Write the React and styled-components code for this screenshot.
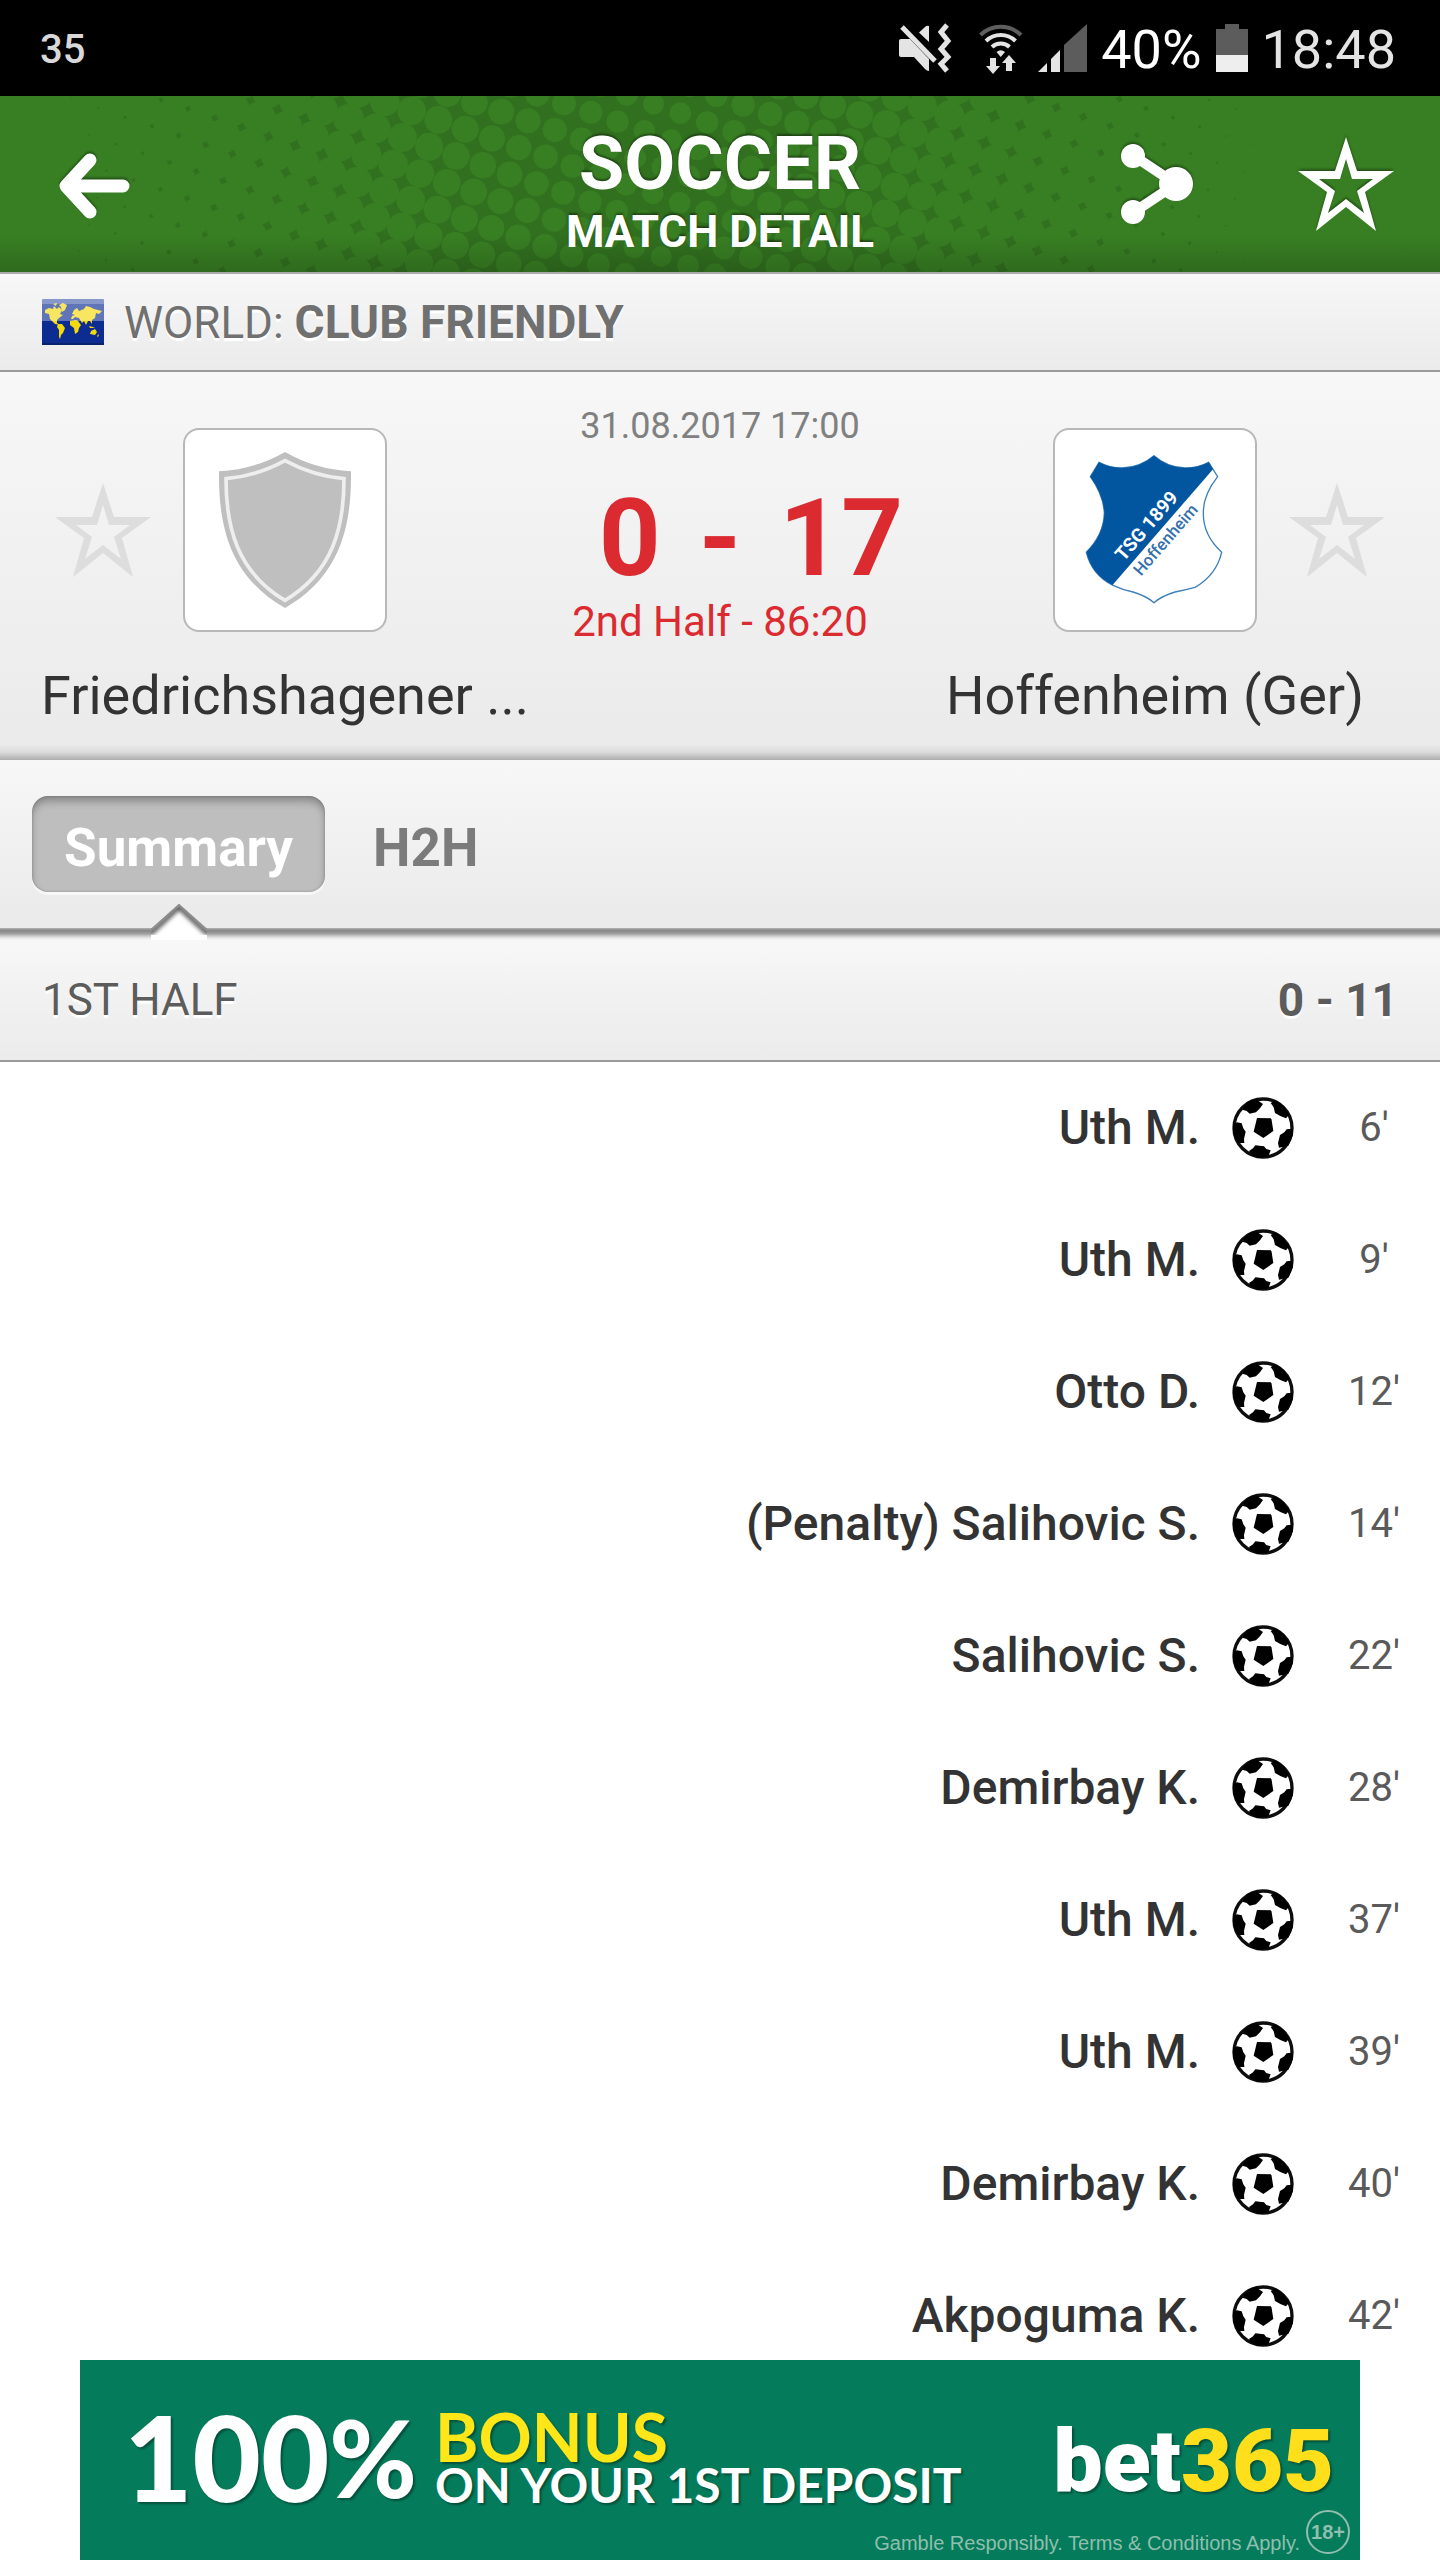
import React, {useState} from 'react';
import styled, {createGlobalStyle} from 'styled-components';

const GlobalStyle = createGlobalStyle`
  * { box-sizing: border-box; }
  html, body { margin: 0; padding: 0; background: #ffffff; }
  button { border: none; background: none; padding: 0; margin: 0; font-family: inherit; cursor: pointer; }
  svg { display: block; }
`;

const Page = styled.div`
  display: flex;
  flex-direction: column;
  height: 100vh;
  font-family: Roboto, "Liberation Sans", sans-serif;
  color: #333333;
`;

// ============ status bar ============
const StatusBar = styled.div`
  display: flex;
  justify-content: space-between;
  align-items: center;
  flex: none;
  height: 96px;
  padding: 0 44px 0 40px;
  background: #000000;
`;

const Notice = styled.span`
  padding-top: 4px;
  font-size: 40px;
  line-height: 44px;
  font-weight: 500;
  color: #d8d8d8;
`;

const StatusIcons = styled.div`
  display: flex;
  align-items: center;
  gap: 14px;
`;

const StatusGroup = styled.div`
  display: flex;
  gap: 26px;
`;

const StatusText = styled.span`
  padding-top: 4px;
  font-size: 54px;
  line-height: 60px;
  color: ${props=>props.color};
`;

// ============ green header ============
const Header = styled.header`
  position: relative;
  display: flex;
  justify-content: space-between;
  align-items: center;
  flex: none;
  height: 178px;
  padding: 0 46px;
  border-bottom: 2px solid #aaaaaa;
  background: #387f23;
  overflow: hidden;
`;

const Pattern = styled.svg`
  position: absolute;
  top: 0;
  left: 0;
  width: 100%;
  height: 100%;
`;

const HeaderSide = styled.div`
  position: relative;
  display: flex;
  flex: 1;
  align-items: center;
  justify-content: ${props=>props.justify};
  gap: 104px;
`;

const HeaderButton = styled.button`
  filter: drop-shadow(0 -2px 1px rgba(0,0,0,0.35));
`;

const Titles = styled.div`
  position: relative;
  padding-top: 16px;
  text-align: center;
  color: #ffffff;
  text-shadow: 0 -2px 2px rgba(0,0,0,0.4);
`;

const Title = styled.h1`
  margin: 0;
  font-size: 74px;
  line-height: 80px;
  font-weight: 700;
`;

const Subtitle = styled.h2`
  margin: 0;
  font-size: 44px;
  line-height: 56px;
  font-weight: 700;
`;

// ============ grey bars ============
const Bar = styled.div`
  display: flex;
  align-items: center;
  flex: none;
  justify-content: ${props=>props.justify || 'flex-start'};
  height: ${props=>props.height}px;
  padding: 0 42px;
  border-bottom: 2px solid #9a9a9a;
  background: linear-gradient(#f7f7f7, #ebebeb);
  font-size: 44px;
  line-height: 56px;
  color: ${props=>props.color};
  text-shadow: 0 3px 1px #ffffff;
`;

const BarStrong = styled.b`
  font-size: 46px;
`;

const League = styled.span`
  margin-left: 20px;
`;

// ============ match ============
const Match = styled.section`
  flex: none;
  padding: 32px 0;
  background:
    linear-gradient(rgba(0,0,0,0), rgba(0,0,0,0.06) 50%, rgba(0,0,0,0.26)) bottom / 100% 16px no-repeat,
    linear-gradient(#f7f7f7, #eaeaea);
`;

const MatchRow = styled.div`
  display: flex;
  align-items: center;
  gap: 32px;
  padding: 0 55px;
`;

const Badge = styled.div`
  flex: none;
  border: 2px solid #b8b8b8;
  border-radius: 16px;
  background: #ffffff;
  overflow: hidden;
`;

const MatchInfo = styled.div`
  flex: 1;
  padding-bottom: 12px;
  text-align: center;
`;

const Kickoff = styled.div`
  font-size: 36px;
  line-height: 44px;
  color: #808080;
`;

const Score = styled.div`
  display: grid;
  grid-template-columns: 1fr auto 1fr;
  gap: 38px;
  margin-top: 28px;
  font-size: 108px;
  line-height: 124px;
  font-weight: 700;
  color: #db2b30;
`;

const Goals = styled.span`
  text-align: ${props=>props.align};
`;

const Period = styled.div`
  font-size: 42px;
  line-height: 44px;
  color: #db2b30;
`;

const TeamNames = styled.div`
  display: grid;
  grid-template-columns: 1fr 300px 1fr;
  margin-top: 8px;
`;

const TeamName = styled.div`
  grid-column: ${props=>props.column};
  text-align: center;
  white-space: nowrap;
  font-size: 54px;
  line-height: 64px;
`;

// ============ tabs ============
const Tabs = styled.div`
  display: flex;
  align-items: flex-start;
  flex: none;
  gap: 16px;
  height: 180px;
  padding: 36px 32px;
  background:
    linear-gradient(#b4b4b4, #888888 20%, #9c9c9c 45%, #e4e4e4 80%, #f7f7f7) bottom / 100% 12px no-repeat,
    linear-gradient(#f7f7f7, #e9e9e9);
`;

const Tab = styled.button`
  position: relative;
  height: 96px;
  padding: 8px 32px 0;
  border-radius: 16px;
  background: ${props=>props.$active ? '#bebebe' : 'none'};
  box-shadow: ${props=>props.$active ? 'inset 0 6px 8px -1px rgba(0,0,0,0.3), inset 0 0 3px rgba(0,0,0,0.2), 0 3px 0 #f7f7f7' : 'none'};
  color: ${props=>props.$active ? '#ffffff' : '#7b7b7b'};
  font-size: 53px;
  line-height: 88px;
  font-weight: 700;
`;

const Notch = styled.svg`
  position: absolute;
  left: 50%;
  bottom: -48px;
  margin-left: -32px;
`;

// ============ events ============
const Events = styled.ul`
  flex: 1;
  min-height: 0;
  margin: 0;
  padding: 0;
  list-style: none;
  overflow: hidden;
`;

const Event = styled.li`
  display: flex;
  align-items: center;
  justify-content: flex-end;
  height: 132px;
  padding-right: 16px;
`;

const Player = styled.span`
  margin-right: 32px;
  font-size: 48px;
  line-height: 56px;
  font-weight: 500;
`;

const Minute = styled.span`
  width: 100px;
  margin-left: 30px;
  text-align: center;
  font-size: 40px;
  line-height: 48px;
  color: #5a5a5a;
`;

// ============ banner ============
const Banner = styled.a`
  flex: none;
  height: 200px;
  margin: 0 80px;
  background: #047b5b;
  color: #ffffff;
  text-decoration: none;
  font-family: Lato, sans-serif;
`;

const Offer = styled.div`
  display: flex;
  align-items: flex-end;
  height: 149px;
  padding: 0 26px 0 44px;
  text-shadow: 2px 2px 2px rgba(0,0,0,0.35);
`;

const Amount = styled.span`
  font-size: ${props=>props.size}px;
  line-height: 104px;
  font-weight: 900;
`;

const OfferText = styled.div`
  flex: 1;
  margin-left: 18px;
  white-space: nowrap;
`;

const Bonus = styled.div`
  font-size: 66px;
  line-height: 48px;
  font-weight: 700;
  color: #ffe619;
`;

const Deposit = styled.div`
  font-size: 48px;
  line-height: 48px;
  font-weight: 700;
`;

const Brand = styled.span`
  padding-bottom: 8px;
  font-family: Roboto, sans-serif;
  font-size: 88px;
  line-height: 80px;
  font-weight: 900;
`;

const Yellow = styled.span`
  color: #ffdf1b;
`;

const Legal = styled.div`
  display: flex;
  justify-content: flex-end;
  align-items: center;
  gap: 6px;
  padding-right: 10px;
  font-family: "Liberation Sans", sans-serif;
  font-size: 20px;
  line-height: 24px;
  color: #8fbfae;
`;

const LegalText = styled.span`
  padding-top: 22px;
`;

const Age = styled.span`
  width: 44px;
  height: 44px;
  border: 2px solid #8fbfae;
  border-radius: 50%;
  text-align: center;
  line-height: 40px;
  font-weight: 700;
`;

// halftone dots, smallest in the middle of the header
const dots = [];
for (let i = -10; i < 60; i++) {
    for (let j = -30; j < 30; j++) {
        const x = 322 + i * 26.8 - j * 9.2;
        const y = 14 + i * 9.2 + j * 26.8;
        if (x > -30 && x < 1470 && y > -25 && y < 200) {
            dots.push({x, y, r: 10.5 + Math.abs(x - 660) * 0.0155});
        }
    }
}

const HeaderPattern = () => (
    <Pattern viewBox="0 0 1440 176" preserveAspectRatio="xMidYMid slice" aria-hidden="true">
        <defs>
            <linearGradient id="headerShade" x1="0" y1="0" x2="0" y2="1">
                <stop offset="0" stopColor="#000" stopOpacity="0" />
                <stop offset="1" stopColor="#000" stopOpacity="0.16" />
            </linearGradient>
        </defs>
        <rect x="70" width="1300" height="176" fill="#31701f" />
        {dots.map((dot, i)=><circle key={i} cx={dot.x} cy={dot.y} r={dot.r} fill="#387f23" />)}
        <rect y="138" width="1440" height="38" fill="url(#headerShade)" />
    </Pattern>
)

const MuteIcon = () => (
    <svg width="54" height="50" viewBox="0 0 54 50">
        <path d="M3 16H12L31 36V48Q29 48 27 46L16 34H3Q1 34 1 32V18Q1 16 3 16Z" fill="#e4e4e4" />
        <path d="M31 3Q29 2 27 4L21 9.500L31 19Z" fill="#e4e4e4" />
        <path d="M4 4L37 38" stroke="#e4e4e4" strokeWidth="5" />
        <path d="M49 2L43 9L50 18L43 26L50 34L43 41L49 48" fill="none" stroke="#e4e4e4" strokeWidth="5" />
    </svg>
)

const WifiIcon = () => (
    <svg width="46" height="51" viewBox="0 0 46 51" fill="none" strokeWidth="4">
        <path d="M2.500 12A29 29 0 0 1 43 12" stroke="#5e5e5e" />
        <path d="M8 18A21 21 0 0 1 37.500 18" stroke="#e4e4e4" />
        <path d="M14 24A12.500 12.500 0 0 1 31.500 24" stroke="#e4e4e4" />
        <path d="M18.500 29Q22.700 25.500 27 29L22.700 34Z" fill="#e4e4e4" />
        <path d="M12 35H18V43H22L15 51L8 43H12Z" fill="#e4e4e4" />
        <path d="M28 48H34V40H38L31 32L24 40H28Z" fill="#e4e4e4" />
    </svg>
)

const SignalIcon = () => (
    <svg width="49" height="48" viewBox="0 0 49 48">
        <path d="M0 48L9 39V48Z" fill="#e4e4e4" />
        <path d="M13 35L22 26V48H13Z" fill="#e4e4e4" />
        <path d="M26 21L49 0V48H26Z" fill="#5c5c5c" />
    </svg>
)

const BatteryIcon = () => (
    <svg width="32" height="48" viewBox="0 0 32 48">
        <path d="M9 0H23V5H32V32H0V5H9Z" fill="#5c5c5c" />
        <path d="M0 31H32V48H0Z" fill="#eeeeee" />
    </svg>
)

const BackIcon = () => (
    <svg width="84" height="70" viewBox="-12 -4 84 70">
        <path d="M32 7L8 33L32 59M8 33H65" fill="none" stroke="#fff" strokeWidth="13" strokeLinecap="round" strokeLinejoin="round" />
    </svg>
)

const ShareIcon = () => (
    <svg width="74" height="82" viewBox="0 0 74 82">
        <path d="M14 13L56 41L14 69" fill="none" stroke="#fff" strokeWidth="10" />
        <circle cx="13" cy="13" r="12" fill="#fff" />
        <circle cx="13" cy="69" r="12" fill="#fff" />
        <circle cx="56" cy="41" r="17" fill="#fff" />
    </svg>
)

const StarIcon = ({color}) => (
    <svg width="96" height="94" viewBox="0 0 96 94">
        <path
            fill={color}
            fillRule="evenodd"
            d="M48 0L59 34H96L67 55L78 94L48 70L18 94L29 55L0 34H37ZM48 22L42 42H21L37 54L30 76L48 62L66 76L59 54L75 42H54Z"
        />
    </svg>
)

const WorldFlag = () => (
    <svg width="62" height="46" viewBox="0 0 62 46">
        <rect width="62" height="46" rx="1" fill="#0c2c91" />
        <g fill="#f4d90d">
            <path d="M3 11L7 9L11 10L12 7L15 10L17 8L20 11L18 15L21 16L17 19L15 21L15 24L18 26L13 25L8 20L7 15L3 14Z" />
            <path d="M17 6L21 4L25 6L23 11L20 13L19 8Z" />
            <path d="M11 5L15 4L14 7Z" />
            <path d="M16 25L20 25L23 29L21 34L19 36L18 40L17 38L17 31L15 28Z" />
            <path d="M29 20L30 17L33 16L30 15L32 11L35 9L37 12L42 10L44 7L48 8L52 10L60 12L57 15L54 14L53 19L50 21L50 25L48 22L46 22L44 26L42 22L40 24L37 19L33 18L31 20Z" />
            <path d="M28 22L34 21L36 22L39 26L37 29L36 33L33 35L32 29L28 26Z" />
            <path d="M49 32L53 30L55 33L53 36L48 35Z" />
            <path d="M47 27L51 28L53 29L48 29ZM56 35L57 37L55 38Z" />
        </g>
        <rect width="62" height="22" fill="#fff" fillOpacity="0.35" />
        <rect width="62" height="5" fill="#fff" fillOpacity="0.25" />
        <rect y="44" width="62" height="2" fill="#0a226c" />
    </svg>
)

const EmptyCrest = () => (
    <svg width="200" height="200" viewBox="555 150 600 600">
        <path d="M855 216Q765 268 657 274C655 440 690 590 855 684C1020 590 1055 440 1053 274Q945 268 855 216Z" fill="#bfbfbf" />
        <path d="M855 242Q770 288 678 296C678 440 710 575 855 661C1000 575 1032 440 1032 296Q940 288 855 242Z" fill="none" stroke="#eeeeee" strokeWidth="11" />
    </svg>
)

const crestPath = "M703 227Q662 262 607 264Q570 264 538 247L512 290Q552 345 554 400Q552 465 500 517Q517 585 580 616Q610 630 640 636Q680 648 703 668Q726 648 766 636Q796 630 826 622Q890 585 906 517Q850 465 851 400Q850 345 894 290L867 247Q835 264 797 264Q742 262 703 227Z";

const HoffenheimCrest = () => (
    <svg width="200" height="200" viewBox="406 150 600 600" fontFamily="Roboto, sans-serif">
        <clipPath id="crest"><path d={crestPath} /></clipPath>
        <path d={crestPath} fill="#fff" stroke="#3d7fbb" strokeWidth="4" />
        <path d="M400 150H982L578 616L400 800Z" fill="#02559f" clipPath="url(#crest)" />
        <text transform="translate(612 546) rotate(-49)" fontSize="57" fontWeight="700" fill="#fff">TSG 1899</text>
        <text transform="translate(664 590) rotate(-49)" fontSize="50" fontWeight="500" fill="#3371ad">Hoffenheim</text>
    </svg>
)

const Ball = () => (
    <svg width="62" height="62" viewBox="39 46 186 186">
        <circle cx="132" cy="139" r="87" fill="#fff" stroke="#0d0d0d" strokeWidth="10" />
        <path d="M114 109L157 110L163 148L133 169L104 150Z" />
        <path d="M70 84L86 60L110 52L132 67L123 80L111 92L92 96L83 88Z" />
        <path d="M155 64L170 56L192 72L210 99L201 110L184 103L168 94L164 77Z" />
        <path d="M42 128L54 122L68 125L73 140L80 150L75 172L76 184L56 184L44 160Z" />
        <path d="M221 141L222 160L208 192L180 198L177 184L183 160L196 152L203 143Z" />
        <path d="M90 208L102 200L109 191L135 194L142 202L155 206L148 224L124 229L100 222Z" />
    </svg>
)

const TabNotch = () => (
    <Notch width="64" height="36" viewBox="0 0 64 36">
        <defs>
            <filter id="notchBlur"><feGaussianBlur stdDeviation="2" /></filter>
            <clipPath id="notchClip"><path d="M4 27L32 1L60 27V36H4Z" /></clipPath>
        </defs>
        <g clipPath="url(#notchClip)">
            <rect width="64" height="36" fill="#fff" />
            <path d="M-4 28H5L32 3L59 28H68" fill="none" stroke="#555" strokeWidth="5" filter="url(#notchBlur)" />
        </g>
        <path d="M4 26L32 1L60 26" fill="none" stroke="#8c8c8c" strokeWidth="2" />
    </Notch>
)

const goals = [
    ["Uth M.", 6],
    ["Uth M.", 9],
    ["Otto D.", 12],
    ["(Penalty) Salihovic S.", 14],
    ["Salihovic S.", 22],
    ["Demirbay K.", 28],
    ["Uth M.", 37],
    ["Uth M.", 39],
    ["Demirbay K.", 40],
    ["Akpoguma K.", 42],
];

const App = () => {
    const [tab, setTab] = useState("Summary");

    return (
    <Page>
        <GlobalStyle />
        <StatusBar>
            <Notice>35</Notice>
            <StatusIcons>
                <StatusGroup>
                    <MuteIcon />
                    <WifiIcon />
                </StatusGroup>
                <SignalIcon />
                <StatusText color="#ffffff">40%</StatusText>
                <BatteryIcon />
                <StatusText color="#e4e4e4">18:48</StatusText>
            </StatusIcons>
        </StatusBar>

        <Header>
            <HeaderPattern />
            <HeaderSide justify="flex-start">
                <HeaderButton aria-label="Back"><BackIcon /></HeaderButton>
            </HeaderSide>
            <Titles>
                <Title>SOCCER</Title>
                <Subtitle>MATCH DETAIL</Subtitle>
            </Titles>
            <HeaderSide justify="flex-end">
                <HeaderButton aria-label="Share"><ShareIcon /></HeaderButton>
                <HeaderButton aria-label="Add match to favourites"><StarIcon color="#ffffff" /></HeaderButton>
            </HeaderSide>
        </Header>

        <Bar height={98} color="#707070">
            <WorldFlag />
            <League>WORLD: <BarStrong>CLUB FRIENDLY</BarStrong></League>
        </Bar>

        <Match>
            <MatchRow>
                <button aria-label="Add home team to favourites"><StarIcon color="#dddddd" /></button>
                <Badge><EmptyCrest /></Badge>
                <MatchInfo>
                    <Kickoff>31.08.2017 17:00</Kickoff>
                    <Score>
                        <Goals align="right">0</Goals>
                        <span>-</span>
                        <Goals align="left">17</Goals>
                    </Score>
                    <Period>2nd Half - 86:20</Period>
                </MatchInfo>
                <Badge><HoffenheimCrest /></Badge>
                <button aria-label="Add away team to favourites"><StarIcon color="#dddddd" /></button>
            </MatchRow>
            <TeamNames>
                <TeamName column={1}>Friedrichshagener ...</TeamName>
                <TeamName column={3}>Hoffenheim (Ger)</TeamName>
            </TeamNames>
        </Match>

        <Tabs>
            {["Summary", "H2H"].map(name=>(
                <Tab key={name} $active={tab === name} onClick={()=>setTab(name)}>
                    {name}
                    {tab === name && <TabNotch />}
                </Tab>
            ))}
        </Tabs>

        <Bar height={122} color="#5c5c5c" justify="space-between">
            <span>1ST HALF</span>
            <BarStrong>0 - 11</BarStrong>
        </Bar>

        <Events>
            {goals.map(([player, minute])=>(
                <Event key={minute}>
                    <Player>{player}</Player>
                    <Ball />
                    <Minute>{minute}'</Minute>
                </Event>
            ))}
        </Events>

        <Banner href="#">
            <Offer>
                <Amount size={118}>100</Amount>
                <Amount size={106}>%</Amount>
                <OfferText>
                    <Bonus>BONUS</Bonus>
                    <Deposit>ON YOUR 1ST DEPOSIT</Deposit>
                </OfferText>
                <Brand>bet<Yellow>365</Yellow></Brand>
            </Offer>
            <Legal>
                <LegalText>Gamble Responsibly. Terms &amp; Conditions Apply.</LegalText>
                <Age>18+</Age>
            </Legal>
        </Banner>
    </Page>
    )
}

export default App;
